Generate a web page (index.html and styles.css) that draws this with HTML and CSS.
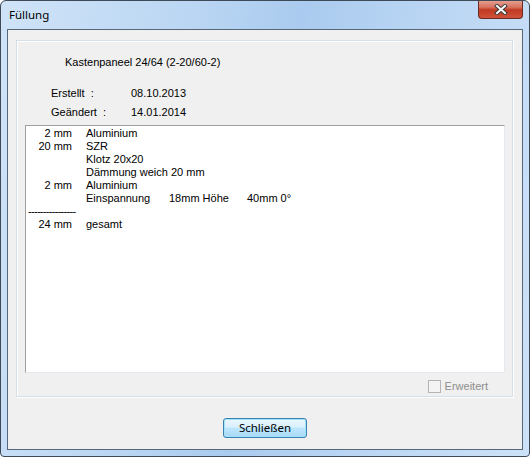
FILE: index.html
```html
<!DOCTYPE html>
<html lang="de">
<head>
    <meta charset="UTF-8">
    <title>Füllung</title>
    <link rel="stylesheet" href="styles.css">
</head>
<body>
    <div class="window">
        <!-- Titelleiste -->
        <div class="titlebar">
            <span class="title">Füllung</span>
            <div class="close-btn">
                <svg width="14" height="11" viewBox="0 0 14 11">
                    <path d="M3 2 L11 9 M11 2 L3 9" stroke="#3a3a3a" stroke-width="4" stroke-linecap="square"/>
                    <path d="M3 2 L11 9 M11 2 L3 9" stroke="#ffffff" stroke-width="2" stroke-linecap="square"/>
                </svg>
            </div>
        </div>

        <div class="client">
            <div class="group">
                <div class="name">Kastenpaneel 24/64 (2-20/60-2)</div>

                <div class="info first">
                    <span class="label">Erstellt&nbsp; :</span>
                    <span>08.10.2013</span>
                </div>
                <div class="info">
                    <span class="label">Geändert&nbsp; :</span>
                    <span>14.01.2014</span>
                </div>

                <!-- Schichtaufbau -->
                <div class="layers">
                    <span class="amount">2 mm</span><span>Aluminium</span>
                    <span class="amount">20 mm</span><span>SZR</span>
                    <span></span><span>Klotz 20x20</span>
                    <span></span><span>Dämmung weich 20 mm</span>
                    <span class="amount">2 mm</span><span>Aluminium</span>
                    <span></span><span><span class="tab1">Einspannung</span><span class="tab2">18mm Höhe</span>40mm 0°</span>
                    <span class="dashes">----------------</span>
                    <span class="amount">24 mm</span><span>gesamt</span>
                </div>

                <div class="options">
                    <span class="checkbox"></span>
                    <span class="check-label">Erweitert</span>
                </div>
            </div>

            <div class="buttons">
                <button class="close">Schließen</button>
            </div>
        </div>
    </div>
</body>
</html>
```

FILE: styles.css
```css
body {
    margin: 0;
    background-color: #ffffff;
}
.window {
    width: 530px;
    height: 457px;
    box-sizing: border-box;
    border: 1px solid #3e4a58;
    border-radius: 6px 6px 4px 4px;
    background: linear-gradient(100deg, #cfe3f8 0%, #bcd7f3 30%, #aacbef 50%, #b9d5f3 70%, #cde2f8 100%);
    display: flex;
    flex-direction: column;
    overflow: hidden;
}
.titlebar {
    height: 28px;
    position: relative;
    display: flex;
    align-items: center;
    padding-left: 8px;
}
.title {
    font-family: "Noto Sans", sans-serif;
    font-size: 11.5px;
    color: #000000;
    margin-top: -2px;
}
.close-btn {
    position: absolute;
    top: -1px;
    right: 6px;
    width: 45px;
    height: 19px;
    box-sizing: border-box;
    border: 1px solid #6b2a22;
    border-top: none;
    border-radius: 0 0 4px 4px;
    background: linear-gradient(#e6a597 0%, #d8735f 40%, #c13a22 55%, #d0523a 100%);
    display: flex;
    align-items: center;
    justify-content: center;
}
.client {
    flex: 1;
    margin: 0 6px 6px 6px;
    border: 1px solid #56677a;
    background-color: #f0f0f0;
    display: flex;
    flex-direction: column;
    font-family: "Liberation Sans", Arial, sans-serif;
    font-size: 11px;
    color: #000000;
}
.group {
    margin: 10px 9px 0 8px;
    height: 357px;
    box-sizing: border-box;
    border: 1px solid #d5dfe5;
    box-shadow: inset 1px 1px 0 #ffffff, 1px 1px 0 #ffffff;
    display: flex;
    flex-direction: column;
    padding: 15px 7px 0 8px;
}
.name {
    line-height: 13px;
    margin-left: 40px;
}
.info {
    line-height: 13px;
    margin-top: 6px;
    margin-left: 26px;
    display: flex;
}
.info.first {
    margin-top: 18px;
}
.label {
    width: 80px;
}
.layers {
    margin-top: 6px;
    height: 248px;
    box-sizing: border-box;
    background-color: #ffffff;
    border: 1px solid #e3e9ef;
    border-top-color: #a0a0a0;
    border-left-color: #a0a0a0;
    padding-top: 1px;
    display: grid;
    grid-template-columns: 46px 1fr;
    column-gap: 14px;
    grid-auto-rows: 13px;
    align-content: start;
    line-height: 13px;
}
.amount {
    text-align: right;
}
.tab1 {
    display: inline-block;
    width: 83px;
}
.tab2 {
    display: inline-block;
    width: 78px;
}
.dashes {
    grid-column: 1 / 3;
    padding-left: 2px;
    letter-spacing: -0.7px;
}
.options {
    display: flex;
    justify-content: flex-end;
    align-items: center;
    margin-top: 7px;
    margin-right: 17px;
    gap: 4px;
}
.checkbox {
    width: 11px;
    height: 11px;
    border: 1px solid #b4b4b4;
    background-color: #f4f4f4;
}
.check-label {
    color: #8d8d8d;
    line-height: 13px;
}
.buttons {
    display: flex;
    justify-content: center;
    margin-top: 21px;
}
.close {
    width: 84px;
    height: 20px;
    box-sizing: border-box;
    border: 1px solid #3c7fb1;
    border-radius: 3px;
    background: linear-gradient(#eaf6fd 0%, #d9f0fc 45%, #bee6fd 50%, #a7d9f5 100%);
    box-shadow: inset 0 0 0 1px #9ee4fb;
    font-family: "Noto Sans", sans-serif;
    font-size: 11.5px;
    color: #000000;
    padding: 0;
    line-height: 16px;
}
```
